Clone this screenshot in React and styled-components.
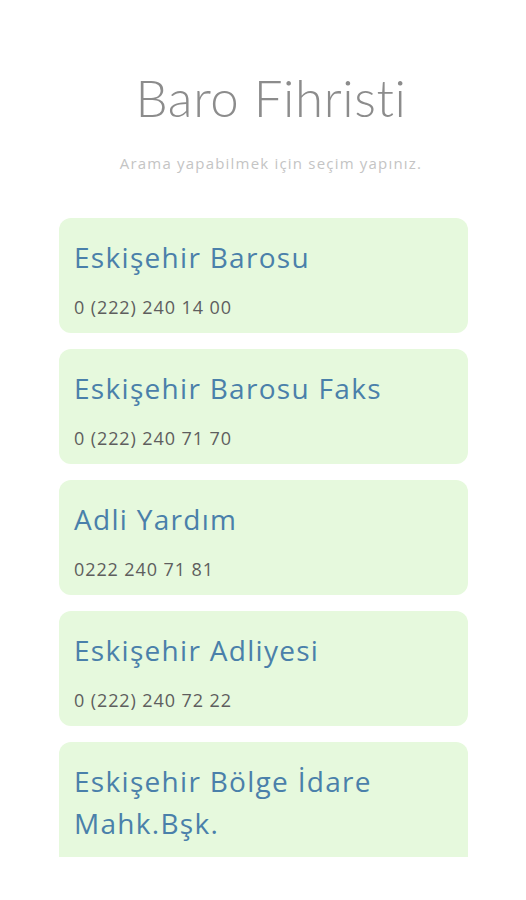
import React from 'react'
import styled, { createGlobalStyle } from 'styled-components'

const Global = createGlobalStyle`
  body {
    margin: 0;
    background: #ffffff;
    font-family: "Open Sans", "Noto Sans", sans-serif;
  }
`

const Page = styled.div`
  width: 526px;
  height: 900px;
  display: flex;
  flex-direction: column;
  background: #fff;
`

const Header = styled.header`
  height: 218px;
  display: flex;
  flex-direction: column;
  align-items: center;
  padding-left: 16px;
  box-sizing: border-box;
`

const Title = styled.h1`
  margin: 68px 0 0;
  font-family: Lato, sans-serif;
  font-size: 51px;
  font-weight: 300;
  line-height: 60px;
  color: #8c8c8c;
  letter-spacing: 0.6px;
`

const Subtitle = styled.p`
  margin: 25px 0 0;
  font-size: 15px;
  font-weight: 400;
  letter-spacing: 1.2px;
  color: #c4c4c4;
`

const List = styled.div`
  height: 639px;
  overflow: hidden;
  display: flex;
  flex-direction: column;
  gap: 16px;
  padding: 0 58px 0 59px;
`

const Card = styled.div`
  flex-shrink: 0;
  box-sizing: border-box;
  background: #e6f9dd;
  border-radius: 12px;
  padding: 18px 15px 14px;
`

const Name = styled.div`
  font-size: 28px;
  line-height: 42px;
  letter-spacing: 1.3px;
  color: #4a80aa;
`

const Phone = styled.div`
  margin-top: 17px;
  font-size: 18px;
  line-height: 24px;
  letter-spacing: 0.9px;
  color: #5e5e5e;
`

const entries = [
  { name: 'Eskişehir Barosu', phone: '0 (222) 240 14 00' },
  { name: 'Eskişehir Barosu Faks', phone: '0 (222) 240 71 70' },
  { name: 'Adli Yardım', phone: '0222 240 71 81' },
  { name: 'Eskişehir Adliyesi', phone: '0 (222) 240 72 22' },
  { name: 'Eskişehir Bölge İdare Mahk.Bşk.', phone: '0 (222) 240 10 69' },
]

export default function App() {
  return (
    <Page>
      <Global />
      <Header>
        <Title>Baro Fihristi</Title>
        <Subtitle>Arama yapabilmek için seçim yapınız.</Subtitle>
      </Header>
      <List>
        {entries.map(e => (
          <Card key={e.name}>
            <Name>{e.name}</Name>
            <Phone>{e.phone}</Phone>
          </Card>
        ))}
      </List>
    </Page>
  )
}
